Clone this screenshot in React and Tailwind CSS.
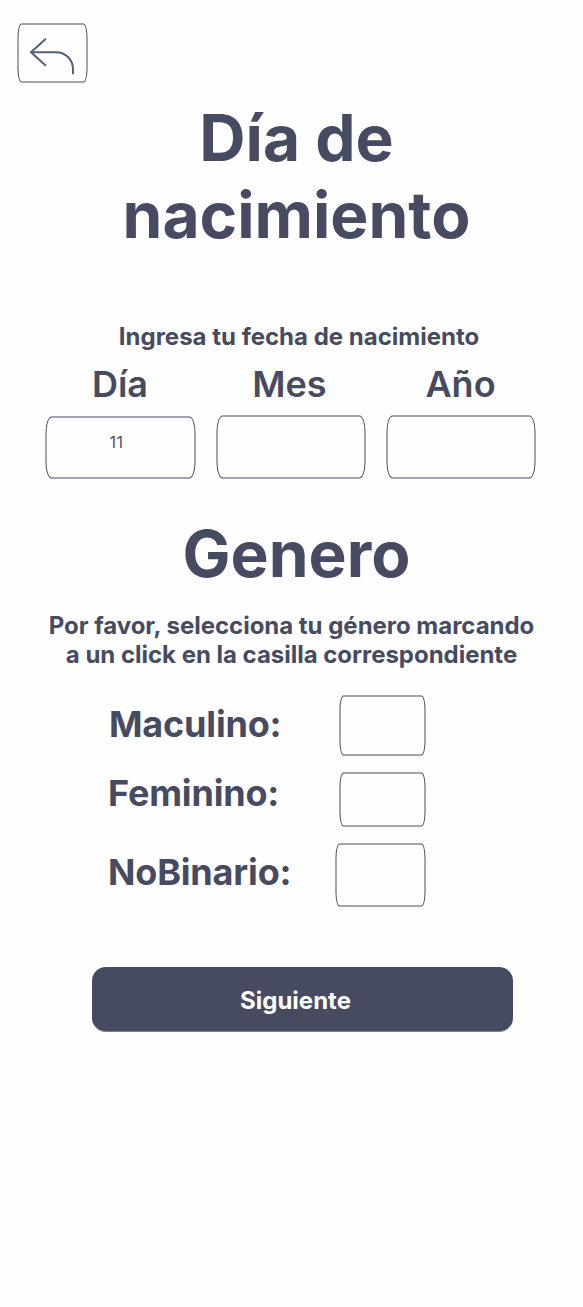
import React from "react";

const dateFields = [
  { id: "dia", label: "Día", value: "11", column: "w-[151px]", text: "-ml-[1px]", box: "mt-[10px] h-[62px] w-[150px]" },
  { id: "mes", label: "Mes", value: "", column: "ml-[20px] w-[150px]", text: "-ml-[3px]", box: "mt-[9px] h-[63px] w-[149px]" },
  { id: "anio", label: "Año", value: "", column: "ml-[20px] w-[150px]", text: "-ml-[1px]", box: "mt-[9px] h-[63px] w-[149px]" },
];

const genders = [
  { id: "m", label: "Maculino:", row: "h-[61px]", text: "mt-[7px] ml-px", box: "h-[60px] w-[86px]" },
  { id: "f", label: "Feminino:", row: "mt-[16px] h-[55px]", text: "-mt-px", box: "h-[54px] w-[86px]" },
  { id: "nb", label: "NoBinario:", row: "mt-[16px] h-[64px]", text: "mt-[7px]", box: "h-[63px] w-[90px]" },
];

// The half-pixel shift gives the thin outlines their soft edge.
const frame = "translate-x-[0.5px] translate-y-[0.5px] border border-[#474b61]";

function BackButton() {
  return (
    <button
      aria-label="Volver"
      className={`mt-[23px] ml-[17px] mb-px block h-[59px] w-[70px] shrink-0 rounded-[4px/14px] ${frame}`}
    >
      <svg className="block h-[57px] w-[68px]" viewBox="18.5 24.5 68 57" fill="none" stroke="#526078" strokeWidth="2" strokeLinecap="round" strokeLinejoin="round">
        <path d="M45.3 39.2 31 52.2 45.3 65.2" />
        <path d="M31 52.2H56C66 52.2 73 60 73 69V73.5" />
      </svg>
    </button>
  );
}

export default function App() {
  return (
    <main className="flex h-[1307px] w-[583px] flex-col overflow-hidden bg-[#fefefe] font-['Inter',sans-serif] text-[#464b61]">
      <BackButton />

      <h1 className="mt-[16px] ml-[10px] text-center text-[64px] leading-[77px] font-bold">
        Día de
        <br />
        nacimiento
      </h1>

      <h2 className="mt-[69px] ml-[15px] text-center text-2xl leading-[29px] font-bold">
        Ingresa tu fecha de nacimiento
      </h2>

      <div className="mt-[11px] ml-[45px] flex">
        {dateFields.map((f) => (
          <div key={f.id} className={`mb-px flex flex-col ${f.column}`}>
            <span className={`text-center text-4xl leading-[44px] font-semibold ${f.text}`}>{f.label}</span>
            <div className={`rounded-[6px/16px] pt-[15px] pr-[8px] text-center text-base leading-[19px] tracking-[0.5px] text-[#4f5263] ${frame} ${f.box}`}>
              {f.value}
            </div>
          </div>
        ))}
      </div>

      <h1 className="mt-[36px] ml-[10px] text-center text-[64px] leading-[77px] font-bold">Genero</h1>

      <p className="mt-[19px] text-center text-2xl leading-[29px] font-bold tracking-[-0.02px]">
        Por favor, selecciona tu género marcando
        <br />a un click en la casilla correspondiente
      </p>

      <div className="mt-[26px] ml-[108px] w-[318px]">
        {genders.map((g) => (
          <div key={g.id} className={`flex items-start justify-between pr-px ${g.row}`}>
            <span className={`text-4xl leading-[44px] font-bold tracking-[-0.18px] ${g.text}`}>{g.label}</span>
            <div className={`rounded-[4px/14px] ${frame} ${g.box}`} />
          </div>
        ))}
      </div>

      <button className="mt-[60px] ml-[92px] h-[65px] w-[421px] rounded-[14px] border-b border-[#7f8291] bg-[#474b61] pt-[2px] pr-[14px] text-center text-2xl leading-[29px] font-bold text-white">
        Siguiente
      </button>
    </main>
  );
}
